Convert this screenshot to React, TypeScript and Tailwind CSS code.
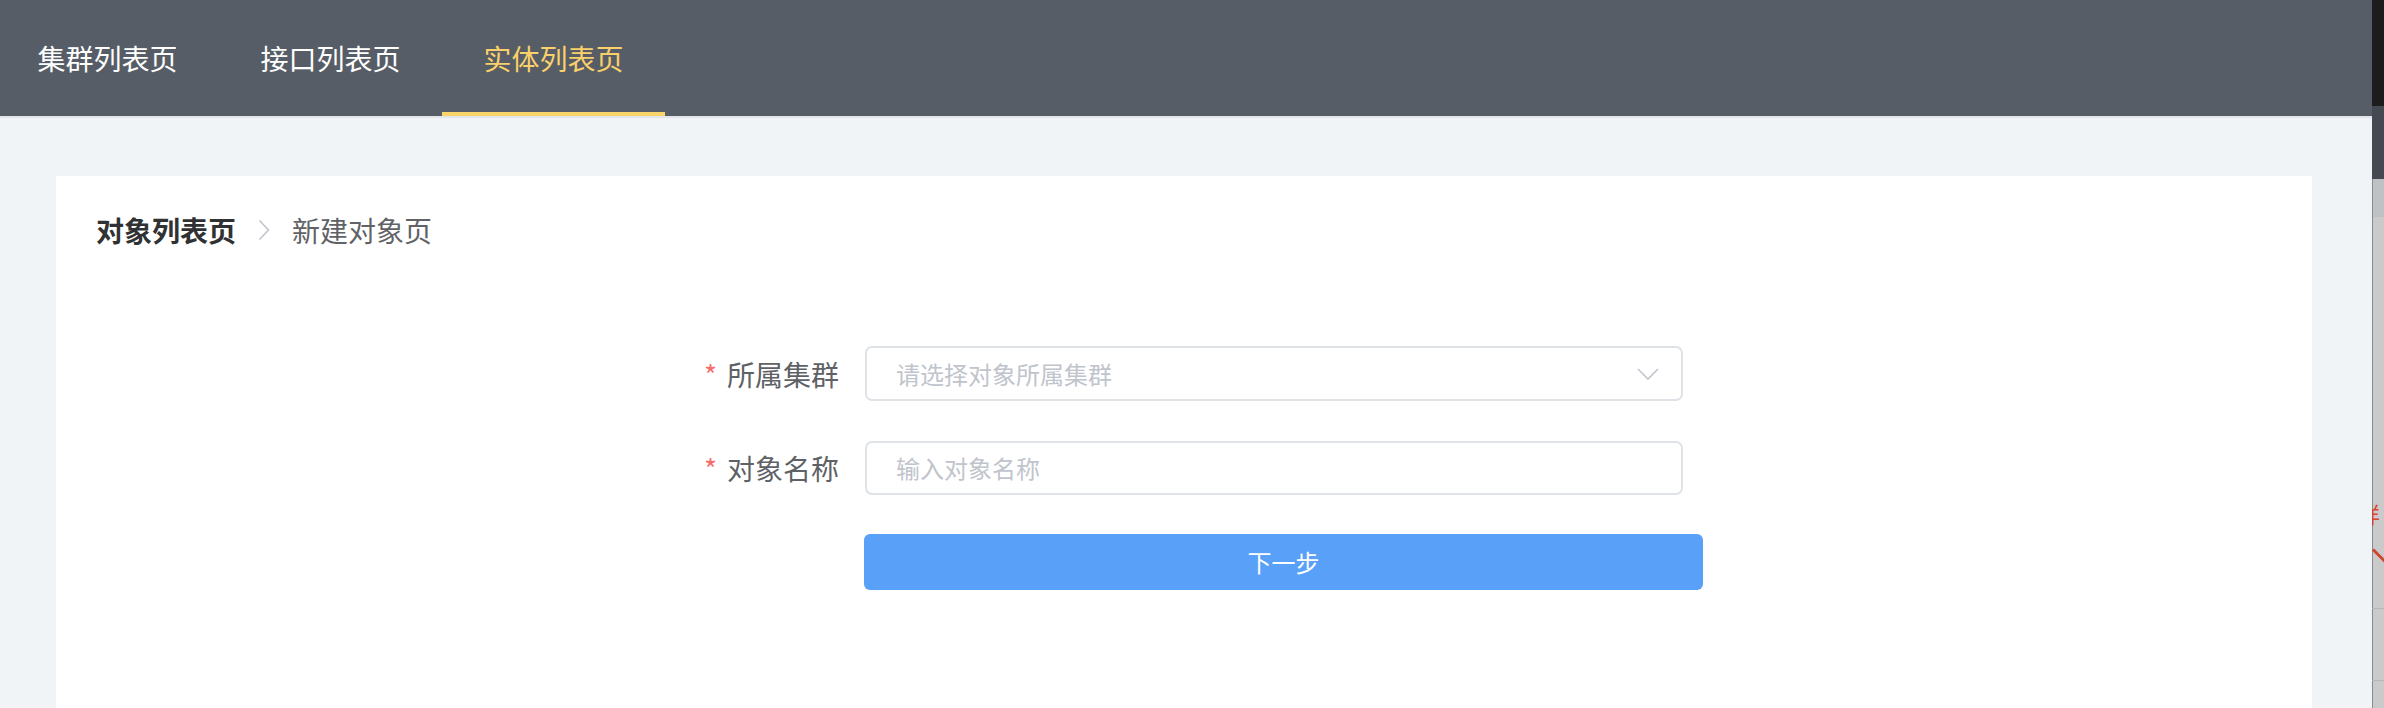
const tabs = [
  { label: '集群列表页', active: false },
  { label: '接口列表页', active: false },
  { label: '实体列表页', active: true },
];

function FormLabel({ text }: { text: string }) {
  return (
    <div className="w-[240px] shrink-0 pr-[26px] text-right text-[28px] leading-[40px] text-[#5e6166]">
      <span className="mr-[10px] text-[#f56c6c]">*</span>
      {text}
    </div>
  );
}

export default function App() {
  return (
    <div className="flex h-[708px] w-[2384px] overflow-hidden font-['Noto_Sans_CJK_SC',sans-serif]">
      <div className="flex w-[2372px] shrink-0 flex-col bg-[#f0f4f7]">
        <header className="h-[118px] shrink-0 border-b-2 border-[#e2e5e9] bg-[#565d66]">
          <nav className="-ml-1 flex h-full">
            {tabs.map(({ label, active }) => (
              <div
                key={label}
                className={`relative flex w-[223px] items-center justify-center text-[28px] ${
                  active ? 'text-[#f9d06a]' : 'text-white'
                }`}
              >
                {label}
                {active ? <span className="absolute inset-x-0 bottom-0 h-1 bg-[#fbd46a]" /> : null}
              </div>
            ))}
          </nav>
        </header>

        <main className="flex flex-1 flex-col pl-[56px] pr-[60px] pt-[58px]">
          <div className="flex-1 bg-white px-10 pt-[34px]">
            <div className="flex h-[40px] items-center text-[28px] leading-[40px]">
              <span className="font-bold text-[#303133]">对象列表页</span>
              <svg className="mx-[22px]" width="12" height="22" viewBox="0 0 12 22" fill="none">
                <path d="M1.5 1.5 L10.5 11 L1.5 20.5" stroke="#c0c4cc" strokeWidth="1.6" />
              </svg>
              <span className="text-[#606266]">新建对象页</span>
            </div>

            <div className="ml-[529px] mt-[96px] flex flex-col">
              <div className="flex items-center">
                <FormLabel text="所属集群" />
                <div className="flex h-[55px] w-[818px] items-center justify-between rounded-[7px] border-2 border-[#dfe2e7] pl-[29px] pr-[22px] text-[24px] text-[#c0c4cc]">
                  <span>请选择对象所属集群</span>
                  <svg width="22" height="12" viewBox="0 0 22 12" fill="none">
                    <path d="M1 1 L11 11 L21 1" stroke="#c0c4cc" strokeWidth="1.6" />
                  </svg>
                </div>
              </div>

              <div className="mt-[40px] flex items-center">
                <FormLabel text="对象名称" />
                <div className="flex h-[54px] w-[818px] items-center rounded-[7px] border-2 border-[#dfe2e7] pl-[29px] text-[24px] text-[#c0c4cc]">
                  输入对象名称
                </div>
              </div>

              <div className="mt-[39px] flex">
                <div className="w-[239px] shrink-0" />
                <button className="h-[56px] w-[839px] rounded-[6px] bg-[#58a0f8] text-[24px] text-white">
                  下一步
                </button>
              </div>
            </div>
          </div>
        </main>
      </div>

      <div className="relative flex w-[12px] shrink-0 flex-col overflow-hidden">
        <div className="h-[106px] bg-[#1c1c1c]" />
        <div className="h-[73px] bg-[#454a52]" />
        <div className="h-[38px] border-l border-[#8a8a8a] bg-[#bfc2c5]" />
        <div className="flex-1 border-l border-[#8a8a8a] bg-[#cacaca]" />
        <span className="absolute left-[-14px] top-[502px] text-[22px] leading-none text-[#d9452c]">详</span>
        <span className="absolute left-[1px] top-[548px] h-[3px] w-[22px] origin-left rotate-45 bg-[#d0442c]" />
        <span className="absolute left-0 top-[608px] h-px w-full bg-[#b6b6b6]" />
        <span className="absolute left-0 top-[680px] h-px w-full bg-[#b6b6b6]" />
      </div>
    </div>
  );
}
